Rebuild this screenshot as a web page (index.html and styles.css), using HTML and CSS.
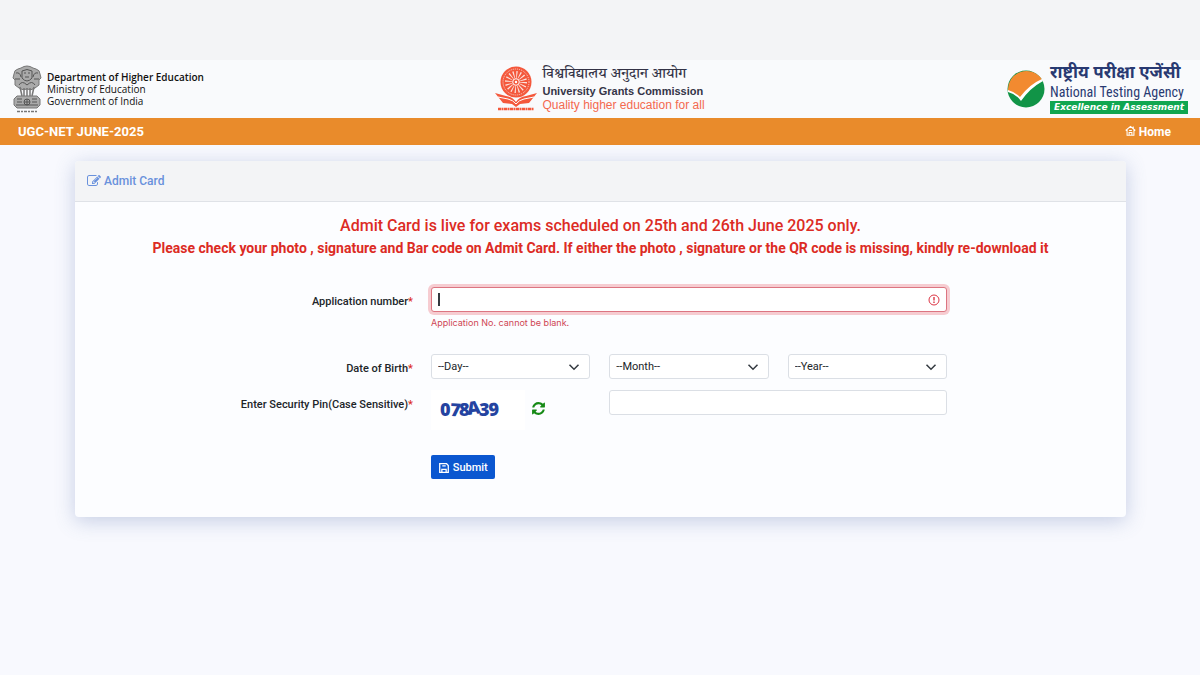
FILE: index.html
```
<!DOCTYPE html>
<html lang="en">
<head>
  <meta charset="utf-8">
  <title>UGC-NET JUNE-2025 Admit Card</title>
  <meta name="viewport" content="width=device-width, initial-scale=1">
  <link rel="stylesheet" href="styles.css">
</head>
<body>

  <header class="header">
    <div class="brand">
      <svg class="emblem" viewBox="0 0 30 48" aria-hidden="true">
        <g fill="#aaa" stroke="#777" stroke-width="1">
          <path d="M9 3q6-4 12 0l3 1q4 1 4 5l1 4-2 2v5l-4 3q-4 3-8 1-4 2-8-1l-4-3v-5l-2-2 1-4q0-4 4-5z"/>
          <path d="M8 22l2 9M12 23v9M15 23v9M18 23v9M22 22l-2 9" stroke-width="1.500"/>
          <path d="M5 31h20l3 3v6l-3 3H5l-3-3v-6z"/>
        </g>
        <g fill="none" stroke="#555" stroke-width="1">
          <path d="M10 6q5-3 10 0v7q-5 6-10 0zM12 8h2M16 8h2M13 12h4M4 8q4-1 5 4M26 8q-4-1-5 4M3 14h5M22 14h5M7 20q3-5 8 0 5-5 8 0"/>
          <circle cx="15" cy="37" r="3"/>
          <path d="M15 34v6M12 37h6M5 37h5M20 37h5M4 40h22M5 34h5M20 34h5"/>
        </g>
        <path d="M5 46.500h20" stroke="#777" stroke-width="1.300" stroke-dasharray="3 1 2 1"/>
      </svg>
      <div class="ministry">
        <b>Department of Higher Education</b>
        <span>Ministry of Education</span>
        <span>Government of India</span>
      </div>
    </div>

    <div class="brand">
      <svg class="ugc-logo" viewBox="0 0 42 46" aria-hidden="true">
        <circle cx="21" cy="16" r="15.500" fill="#f4583c"/>
        <circle cx="21" cy="16" r="13" fill="none" stroke="#fbd5cd" stroke-width="1" stroke-dasharray="1 1"/>
        <circle cx="21" cy="16" r="7.500" fill="none" stroke="#fbe3de" stroke-width="7" stroke-dasharray="1 1.950"/>
        <circle cx="21" cy="16" r="3.300" fill="#f4583c" stroke="#fff" stroke-width="1"/>
        <circle cx="21" cy="16" r="1.200" fill="#fff"/>
        <path d="M0 27l11 3q7 1 10 6 3-5 10-6l11-3-8 10-9 1-4 3-4-3-9-1z" fill="#f4583c"/>
        <path d="M3 31l10 2q5 1 8 5 3-4 8-5l10-2" fill="none" stroke="#fff" stroke-width="1"/>
        <path d="M3 43h36" stroke="#f4583c" stroke-width="2.500" stroke-dasharray="3 .5 2 .5"/>
      </svg>
      <div class="ugc">
        <span class="ugc-hindi" lang="hi">विश्वविद्यालय अनुदान आयोग</span>
        <b>University Grants Commission</b>
        <span class="ugc-motto">Quality higher education for all</span>
      </div>
    </div>

    <div class="brand brand-right">
      <svg class="nta-logo" viewBox="0 0 38 38" aria-hidden="true">
        <circle cx="19" cy="19" r="18.500" fill="#119447"/>
        <path d="M1 21A18.500 18.500 0 0 1 35 9.500Q22 17 13 29 8 23 1 21z" fill="#f28a30"/>
        <path d="M1 20q7 2 12 7Q23 14 35 9l1 2Q23 18 14 31q-5-7-13-9z" fill="#fff"/>
      </svg>
      <div class="nta">
        <b class="nta-hindi" lang="hi">राष्ट्रीय परीक्षा एजेंसी</b>
        <span class="nta-name">National Testing Agency</span>
        <span class="nta-motto">Excellence in Assessment</span>
      </div>
    </div>
  </header>

  <nav class="navbar">
    <span>UGC-NET JUNE-2025</span>
    <a href="#">
      <svg class="home-icon" viewBox="0 0 16 16" aria-hidden="true">
        <path d="M1 8l7-6 7 6M3 7v8h10V7M12 5V2M6 15v-4h4v4M6 8h4" fill="none" stroke="currentColor" stroke-width="1.500"/>
      </svg>
      Home
    </a>
  </nav>

  <main class="card">
    <h1 class="card-header">
      <svg class="edit-icon" viewBox="0 0 1792 1792" aria-hidden="true">
        <path fill="currentColor" d="M888 1184l116-116-152-152-116 116v56h96v96h56zm440-720q-16-16-33 1l-350 350q-17 17-1 33t33-1l350-350q17-17 1-33zm80 594v190q0 119-84.5 203.5t-203.5 84.5h-832q-119 0-203.5-84.5t-84.5-203.5v-832q0-119 84.5-203.5t203.5-84.5h832q63 0 117 25 15 7 18 23 3 17-9 29l-49 49q-14 14-32 8-23-6-45-6h-832q-66 0-113 47t-47 113v832q0 66 47 113t113 47h832q66 0 113-47t47-113v-126q0-13 9-22l64-64q15-15 35-7t20 29zm-96-738l288 288-672 672h-288v-288zm444 132l-92 92-288-288 92-92q28-28 68-28t68 28l152 152q28 28 28 68t-28 68z"/>
      </svg>
      Admit Card
    </h1>

    <div class="notice">
      <p class="notice-title">Admit Card is live for exams scheduled on 25th and 26th June 2025 only.</p>
      <p>Please check your photo , signature and Bar code on Admit Card. If either the photo , signature or the QR code is missing, kindly re-download it</p>
    </div>

    <form class="form">
      <div class="form-row appno-row">
        <label for="appno">Application number<span class="required">*</span></label>
        <div class="field">
          <div class="input-wrap">
            <input class="control invalid" id="appno" type="text" aria-describedby="appno-error">
            <span class="caret"></span>
            <svg class="error-icon" viewBox="0 0 12 12" aria-hidden="true">
              <circle cx="6" cy="6" r="5" fill="none" stroke="#dc3545"/>
              <path d="M6 3v3.500M6 7.500v1.500" stroke="#dc3545" stroke-width="1.400"/>
            </svg>
          </div>
          <div class="error" id="appno-error">Application No. cannot be blank.</div>
        </div>
      </div>

      <div class="form-row">
        <label for="day">Date of Birth<span class="required">*</span></label>
        <div class="thirds">
          <div class="select-wrap">
            <select class="control" id="day"><option>--Day--</option></select>
            <svg class="chevron" viewBox="0 0 16 16" aria-hidden="true"><path d="M2 5l6 6 6-6"/></svg>
          </div>
          <div class="select-wrap">
            <select class="control" aria-label="Month"><option>--Month--</option></select>
            <svg class="chevron" viewBox="0 0 16 16" aria-hidden="true"><path d="M2 5l6 6 6-6"/></svg>
          </div>
          <div class="select-wrap">
            <select class="control" aria-label="Year"><option>--Year--</option></select>
            <svg class="chevron" viewBox="0 0 16 16" aria-hidden="true"><path d="M2 5l6 6 6-6"/></svg>
          </div>
        </div>
      </div>

      <div class="form-row">
        <label for="pin">Enter Security Pin(Case Sensitive)<span class="required">*</span></label>
        <div class="thirds">
          <div class="captcha">
            <svg class="captcha-image" viewBox="0 0 94 40">
              <text x="9 19 28 37 48 58" y="26 26 26 25 26 26" rotate="0 3 0 -8 0 -4">078A39</text>
            </svg>
            <button class="refresh" type="button" aria-label="Refresh">
              <svg viewBox="0 0 1792 1792" aria-hidden="true">
                <path fill="currentColor" d="M1639 1056q0 5-1 7-64 268-268 434.5t-478 166.5q-146 0-282.5-55t-243.5-157l-129 129q-19 19-45 19t-45-19-19-45v-448q0-26 19-45t45-19h448q26 0 45 19t19 45-19 45l-137 137q71 66 161 102t187 36q134 0 250-65t186-179q11-17 53-117 8-23 30-23h192q13 0 22.500 9.500t9.500 22.500zm25-800v448q0 26-19 45t-45 19h-448q-26 0-45-19t-19-45 19-45l138-138q-148-137-349-137-134 0-250 65t-186 179q-11 17-53 117-8 23-30 23h-199q-13 0-22.500-9.500t-9.500-22.500v-7q65-268 270-434.500t480-166.500q146 0 284 55.500t245 156.500l130-129q19-19 45-19t45 19 19 45z"/>
              </svg>
            </button>
          </div>
          <input class="control pin" id="pin" type="text">
        </div>
      </div>

      <div class="form-row submit-row">
        <button class="btn" type="submit">
          <svg class="save-icon" viewBox="0 0 14 14" aria-hidden="true">
            <path d="M2 2h8l2 2v8H2zM4.500 12V8.500h5V12M5 4.500h4" fill="none" stroke="currentColor" stroke-width="1.500"/>
          </svg>
          Submit
        </button>
      </div>
    </form>
  </main>

</body>
</html>
```
FILE: styles.css
```
* {
  box-sizing: border-box;
}

body {
  margin: 0;
  min-height: 100vh;
  padding-top: 60px;
  background: linear-gradient(#f3f4f6 60px, #f8f9fe 60px);
  background-repeat: no-repeat;
  background-color: #f8f9fe;
  font-family: Roboto, "Liberation Sans", sans-serif;
  font-size: 11px;
  color: #212529;
}

p {
  margin: 0;
}

.header {
  display: grid;
  grid-template-columns: 1fr auto 1fr;
  align-items: center;
  height: 58px;
  padding: 0 12px;
  background-color: #f9fafc;
}

.brand {
  display: flex;
  align-items: center;
}

.brand-right {
  justify-content: flex-end;
}

.emblem {
  width: 30px;
  height: 48px;
  margin-right: 5px;
}

.ministry {
  display: flex;
  flex-direction: column;
  font-family: "Open Sans", sans-serif;
  font-size: 10px;
  line-height: 12px;
  color: #111;
}

.ministry b {
  font-weight: 600;
}

.ugc-logo {
  width: 42px;
  height: 46px;
  margin-right: 5px;
}

.ugc {
  display: flex;
  flex-direction: column;
  font-family: "Liberation Sans", sans-serif;
  font-size: 11px;
  line-height: 13px;
  color: #343447;
}

.ugc-hindi {
  font-family: "Noto Serif Devanagari", "Noto Sans Devanagari", serif;
  font-size: 15px;
  font-weight: 500;
  line-height: 18px;
}

.ugc-motto {
  font-size: 12px;
  line-height: 14px;
  color: #f4694e;
}

.nta-logo {
  width: 38px;
  height: 38px;
  margin-right: 5px;
}

.nta {
  display: flex;
  flex-direction: column;
  color: #293a72;
}

.nta-hindi {
  font-family: "Noto Sans Devanagari", sans-serif;
  font-size: 17px;
  line-height: 18px;
}

.nta-name {
  font-family: "Roboto Condensed", Lato, sans-serif;
  font-size: 14px;
  line-height: 18px;
}

.nta-motto {
  padding: 0 4px;
  background-color: #10a650;
  font-family: "DejaVu Sans", sans-serif;
  font-size: 9px;
  font-style: italic;
  font-weight: bold;
  line-height: 13px;
  color: #fff;
}

.navbar {
  display: flex;
  justify-content: space-between;
  align-items: center;
  height: 27px;
  padding: 0 29px 0 18px;
  background-color: #e98b2b;
  font-size: 13px;
  font-weight: 700;
  color: #fff;
}

.navbar a {
  font-size: 12px;
  color: #fff;
  text-decoration: none;
}

.home-icon {
  width: 11px;
  height: 11px;
}

.card {
  margin: 16px 74px 0 75px;
  background-color: #fcfdff;
  border-radius: 4px;
  box-shadow: 0 4px 20px rgba(80, 105, 170, 0.3);
}

.card-header {
  margin: 0;
  padding: 0 12px;
  background-color: #f3f4f6;
  border-bottom: 1px solid #dfe2e7;
  border-radius: 4px 4px 0 0;
  font-size: 12px;
  font-weight: 500;
  line-height: 40px;
  color: #6991dc;
}

.edit-icon {
  width: 14px;
  height: 14px;
  vertical-align: -3px;
}

.notice {
  padding: 13px 12px 28px;
  text-align: center;
  font-size: 14px;
  font-weight: 700;
  line-height: 22px;
  color: #dc2b24;
}

.notice-title {
  font-size: 16px;
  font-weight: 500;
}

.form {
  padding-bottom: 38px;
}

.form-row {
  display: grid;
  grid-template-columns: 338fr 516fr 161fr;
  column-gap: 18px;
  margin-bottom: 11px;
}

.form-row label {
  padding-top: 8px;
  text-align: right;
  font-weight: 500;
  line-height: 14px;
}

.required {
  color: #dc2b24;
}

.appno-row {
  margin-bottom: 25px;
}

.input-wrap,
.select-wrap {
  position: relative;
}

.control {
  display: block;
  width: 100%;
  height: 25px;
  padding: 0 7px;
  border: 1px solid #dbdfe5;
  border-radius: 3px;
  background-color: #fff;
  font-family: inherit;
  font-size: 11px;
  color: #212529;
}

select.control {
  appearance: none;
  padding: 0 6px;
}

.control.invalid {
  border-color: #dc7581;
  box-shadow: 0 0 0 3px #f6ccd1;
  outline: none;
}

.caret {
  position: absolute;
  top: 6px;
  left: 7px;
  width: 2px;
  height: 13px;
  background-color: #343a40;
}

.error-icon {
  position: absolute;
  top: 7px;
  right: 7px;
  width: 12px;
  height: 12px;
}

.chevron {
  position: absolute;
  top: 7px;
  right: 10px;
  width: 12px;
  height: 12px;
  fill: none;
  stroke: #343a40;
  stroke-width: 2;
  pointer-events: none;
}

.error {
  padding-top: 4px;
  font-family: Inter, sans-serif;
  font-size: 9px;
  line-height: 13px;
  color: #cf4654;
}

.thirds {
  display: grid;
  grid-template-columns: repeat(3, 1fr);
  column-gap: 19px;
}

.captcha {
  display: flex;
  align-items: flex-start;
}

.captcha-image {
  width: 94px;
  height: 40px;
  background-color: #fff;
  font-family: "Open Sans", sans-serif;
  font-size: 18px;
  font-weight: 800;
  fill: #2443a0;
}

.refresh {
  margin: 11px 0 0 6px;
  padding: 0;
  border: 0;
  background: none;
  line-height: 0;
  color: #168a16;
  cursor: pointer;
}

.refresh svg {
  width: 15px;
  height: 15px;
}

.pin {
  grid-column: span 2;
}

.submit-row {
  margin: 25px 0 0;
}

.btn {
  grid-column: 2;
  justify-self: start;
  height: 24px;
  padding: 0 7px;
  border: 0;
  border-radius: 2px;
  background-color: #0b57d0;
  font-family: inherit;
  font-size: 11px;
  font-weight: 500;
  color: #fff;
  cursor: pointer;
}

.save-icon {
  width: 12px;
  height: 12px;
  vertical-align: -3px;
}
```
